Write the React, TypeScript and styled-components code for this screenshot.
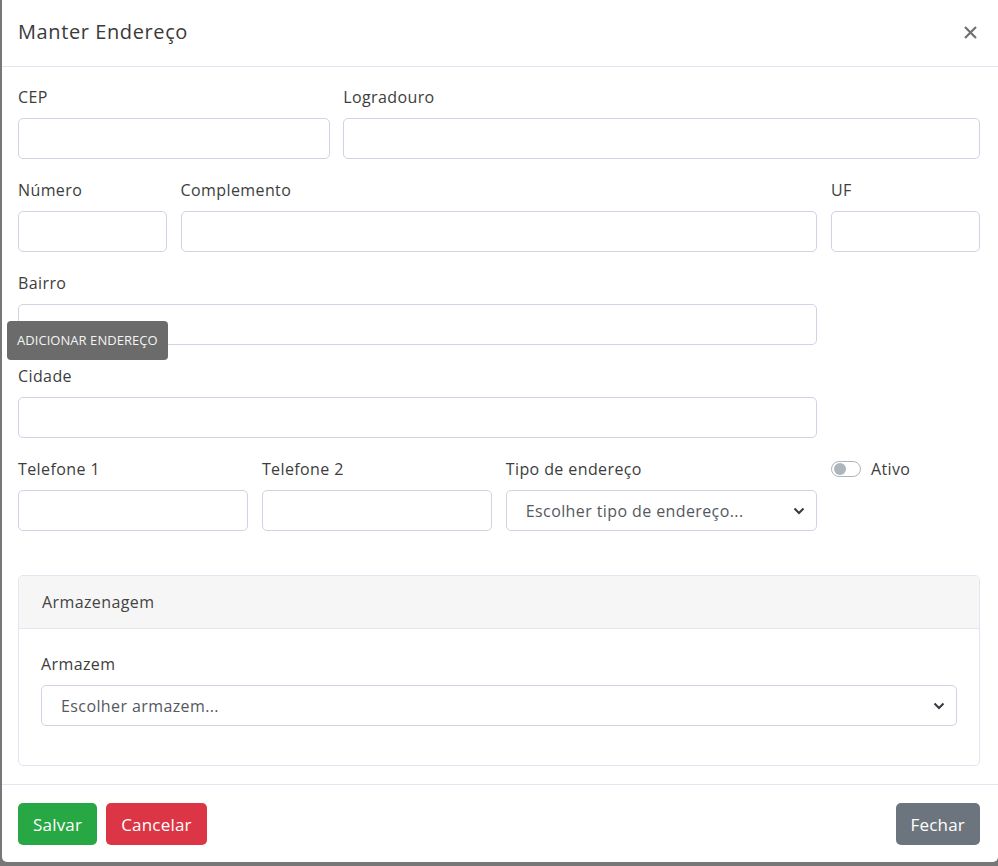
import React from 'react';
import styled, { createGlobalStyle } from 'styled-components';

const GlobalStyle = createGlobalStyle`
  html, body {
    margin: 0;
    padding: 0;
  }
  body {
    background: #777777;
    font-family: "Open Sans", "Noto Sans", sans-serif;
    overflow: hidden;
  }
`;

const Backdrop = styled.div`
  width: 998px;
  height: 866px;
  background: #777777;
  overflow: hidden;
`;

const Modal = styled.div`
  position: relative;
  margin-left: 2px;
  width: 996px;
  height: 862px;
  background: #ffffff;
  border-radius: 0 0 5px 5px;
  box-sizing: border-box;
`;

const Header = styled.div`
  display: flex;
  align-items: center;
  justify-content: space-between;
  padding: 17px 18px 19px 16px;
  border-bottom: 1px solid #e3e6f0;
`;

const Title = styled.h5`
  margin: 0;
  font-size: 20px;
  line-height: 30px;
  font-weight: 400;
  letter-spacing: 0.6px;
  color: #3a3a3a;
`;

const CloseButton = styled.button`
  display: flex;
  align-items: center;
  justify-content: center;
  width: 24px;
  height: 24px;
  margin-right: -2px;
  padding: 0;
  border: none;
  background: transparent;
  cursor: pointer;
`;

const Body = styled.div`
  padding: 17px 18px 0 16px;
`;

const FormRow = styled.div`
  display: grid;
  grid-template-columns: repeat(12, 1fr);
  column-gap: 13.5px;
  margin-bottom: 18px;
`;

const Field = styled.div<{ span: number }>`
  grid-column: span ${(p) => p.span};
  min-width: 0;
`;

const Label = styled.label`
  display: block;
  font-size: 16px;
  line-height: 26px;
  margin-bottom: 8px;
  letter-spacing: 0.4px;
  color: #3d3d3d;
`;

const Input = styled.input`
  display: block;
  width: 100%;
  height: 41px;
  margin: 0;
  box-sizing: border-box;
  border: 1px solid #d1d3e2;
  border-radius: 5px;
  background: #fff;
  outline: none;
`;

const Select = styled.div`
  display: flex;
  align-items: center;
  justify-content: space-between;
  height: 41px;
  box-sizing: border-box;
  padding: 0 11px 0 19px;
  border: 1px solid #d1d3e2;
  border-radius: 5px;
  font-size: 16px;
  letter-spacing: 0.4px;
  color: #555861;
`;

const SwitchField = styled.div`
  grid-column: span 2;
  display: flex;
  align-items: center;
  gap: 10px;
  height: 26px;
`;

const Track = styled.span`
  position: relative;
  display: inline-block;
  width: 30px;
  height: 16px;
  box-sizing: border-box;
  border: 1px solid #adb5bd;
  border-radius: 8px;
  background: #fff;
`;

const Knob = styled.span`
  position: absolute;
  top: 1px;
  left: 2px;
  width: 12px;
  height: 12px;
  border-radius: 50%;
  background: #adb5bd;
`;

const SwitchLabel = styled.span`
  font-size: 16px;
  letter-spacing: 0.4px;
  color: #3d3d3d;
`;

const Card = styled.div`
  margin-top: 44px;
  margin-bottom: 18px;
  border: 1px solid #e3e6f0;
  border-radius: 5px;
`;

const CardHeader = styled.div`
  padding: 13px 23px;
  line-height: 26px;
  font-size: 16px;
  letter-spacing: 0.4px;
  color: #444;
  background: #f6f6f6;
  border-bottom: 1px solid #e3e6f0;
  border-radius: 5px 5px 0 0;
`;

const CardBody = styled.div`
  padding: 22px 22px 21px;
`;

const Footer = styled.div`
  display: flex;
  align-items: center;
  gap: 9px;
  padding: 18px 18px 17px 16px;
  border-top: 1px solid #e3e6f0;
`;

const colors = {
  success: '#28a745',
  danger: '#dc3545',
  secondary: '#6c757d',
};

const Button = styled.button<{ variant: keyof typeof colors; push?: boolean }>`
  height: 42px;
  padding: 0 15px;
  border: none;
  border-radius: 5px;
  font-family: inherit;
  font-size: 17px;
  letter-spacing: 0.2px;
  color: #fff;
  background: ${(p) => colors[p.variant]};
  margin-left: ${(p) => (p.push ? 'auto' : '0')};
  cursor: pointer;
`;

const Tooltip = styled.div`
  position: absolute;
  left: 5px;
  top: 321px;
  height: 39px;
  line-height: 39px;
  padding: 0 10px;
  border-radius: 4px;
  background: #6b6b6b;
  color: #f4f4f4;
  font-size: 13px;
  letter-spacing: 0.05px;
  white-space: nowrap;
`;

const Chevron = () => (
  <svg width="12" height="8" viewBox="0 0 12 8">
    <path d="M1.5 1.5 L6 6 L10.5 1.5" fill="none" stroke="#343a40" strokeWidth="2" />
  </svg>
);

const CloseIcon = () => (
  <svg width="13" height="13" viewBox="0 0 13 13">
    <path d="M1 1 L12 12 M12 1 L1 12" stroke="#707070" strokeWidth="2.2" />
  </svg>
);

export default function App() {
  return (
    <>
      <GlobalStyle />
      <Backdrop>
        <Modal>
          <Header>
            <Title>Manter Endereço</Title>
            <CloseButton aria-label="Fechar">
              <CloseIcon />
            </CloseButton>
          </Header>

          <Body>
            <FormRow>
              <Field span={4}>
                <Label>CEP</Label>
                <Input />
              </Field>
              <Field span={8}>
                <Label>Logradouro</Label>
                <Input />
              </Field>
            </FormRow>

            <FormRow>
              <Field span={2}>
                <Label>Número</Label>
                <Input />
              </Field>
              <Field span={8}>
                <Label>Complemento</Label>
                <Input />
              </Field>
              <Field span={2}>
                <Label>UF</Label>
                <Input />
              </Field>
            </FormRow>

            <FormRow>
              <Field span={10}>
                <Label>Bairro</Label>
                <Input />
              </Field>
            </FormRow>

            <FormRow>
              <Field span={10}>
                <Label>Cidade</Label>
                <Input />
              </Field>
            </FormRow>

            <FormRow>
              <Field span={3}>
                <Label>Telefone 1</Label>
                <Input />
              </Field>
              <Field span={3}>
                <Label>Telefone 2</Label>
                <Input />
              </Field>
              <Field span={4}>
                <Label>Tipo de endereço</Label>
                <Select>
                  <span>Escolher tipo de endereço...</span>
                  <Chevron />
                </Select>
              </Field>
              <SwitchField>
                <Track>
                  <Knob />
                </Track>
                <SwitchLabel>Ativo</SwitchLabel>
              </SwitchField>
            </FormRow>

            <Card>
              <CardHeader>Armazenagem</CardHeader>
              <CardBody>
                <FormRow>
                  <Field span={12}>
                    <Label>Armazem</Label>
                    <Select>
                      <span>Escolher armazem...</span>
                      <Chevron />
                    </Select>
                  </Field>
                </FormRow>
              </CardBody>
            </Card>
          </Body>

          <Footer>
            <Button variant="success">Salvar</Button>
            <Button variant="danger">Cancelar</Button>
            <Button variant="secondary" push>
              Fechar
            </Button>
          </Footer>

          <Tooltip>ADICIONAR ENDEREÇO</Tooltip>
        </Modal>
      </Backdrop>
    </>
  );
}
